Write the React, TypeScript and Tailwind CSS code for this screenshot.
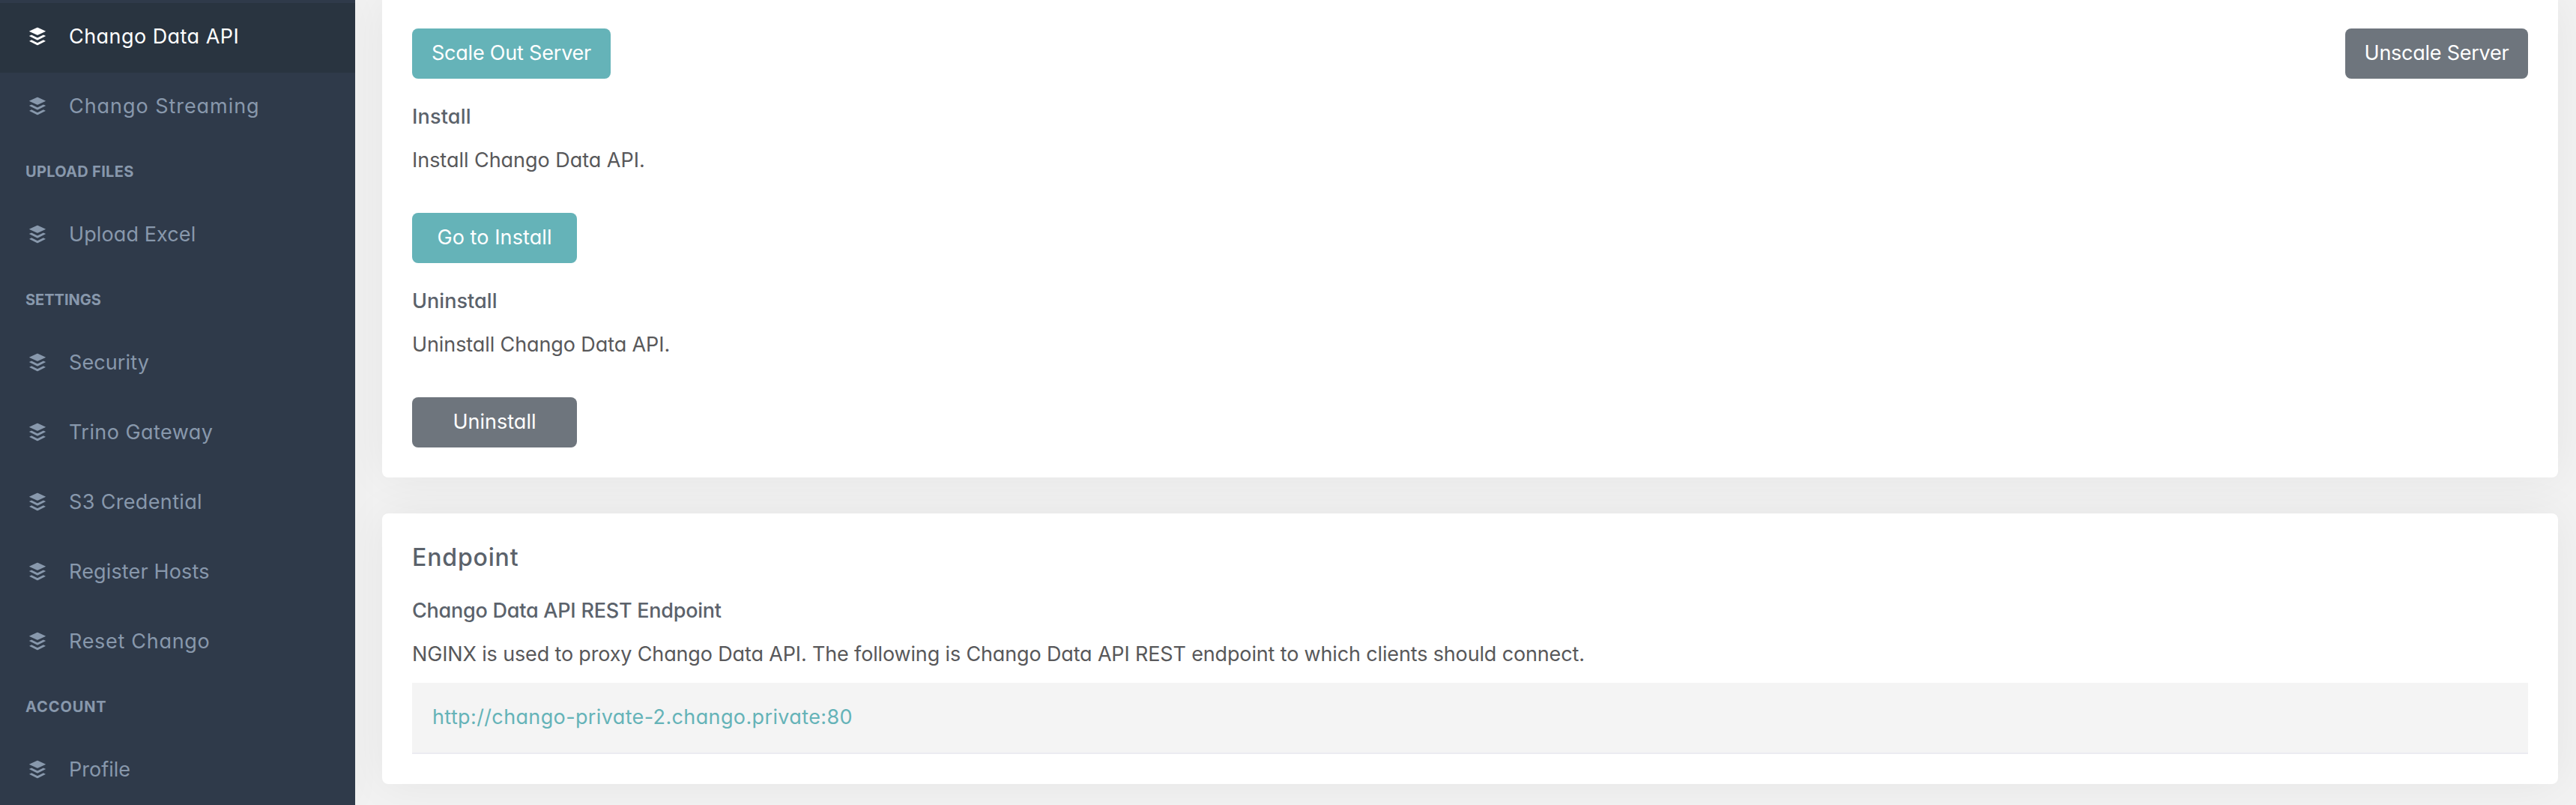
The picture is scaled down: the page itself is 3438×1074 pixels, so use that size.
import type { ReactNode } from "react";
import { FaBuffer } from "react-icons/fa";

function NavItem({ label, spacing, active = false }: { label: string; spacing: string; active?: boolean }) {
  return (
    <a
      className={`flex h-[93px] items-center pb-[5px] pl-[38px] text-[27px] ${
        active ? "bg-[#293440] text-white" : "text-[#8898ac]"
      }`}
    >
      <FaBuffer className="h-[27px] w-6 shrink-0" />
      <span className={`ml-[30px] pt-0.5 whitespace-nowrap ${spacing}`}>{label}</span>
    </a>
  );
}

function NavHeading({ label, spacing }: { label: string; spacing: string }) {
  return (
    <div className={`flex h-[78px] items-center pl-[34px] text-[20px] font-bold text-[#8898ac] ${spacing}`}>{label}</div>
  );
}

function Button({ className, children }: { className: string; children: ReactNode }) {
  return (
    <button
      className={`flex h-[67px] items-center justify-center rounded-lg pb-px text-[27px] whitespace-nowrap text-white ${className}`}
    >
      {children}
    </button>
  );
}

function Section({ title, titleSpacing, text, textSpacing }: { title: string; titleSpacing: string; text: string; textSpacing: string }) {
  return (
    <>
      <h5 className={`text-[27px] leading-10 font-medium text-[#5b626b] ${titleSpacing}`}>{title}</h5>
      <p className={`mt-[18px] text-[27px] leading-10 whitespace-nowrap text-[#58585a] ${textSpacing}`}>{text}</p>
    </>
  );
}

export default function App() {
  return (
    <div className="flex h-[1074px] w-[3438px] overflow-hidden bg-[#f2f2f2] font-['Inter',sans-serif] [font-feature-settings:'cv11']">
      <nav className="relative z-10 w-[474px] shrink-0 bg-[#2f3a4a] pt-1 shadow-[0_0_40px_rgba(0,0,0,0.03)]">
        <NavItem label="Chango Data API" spacing="tracking-[0.45px]" active />
        <NavItem label="Chango Streaming" spacing="tracking-[0.95px]" />
        <NavHeading label="UPLOAD FILES" spacing="tracking-[0.3px]" />
        <NavItem label="Upload Excel" spacing="tracking-[0.1px]" />
        <NavHeading label="SETTINGS" spacing="tracking-[0px]" />
        <NavItem label="Security" spacing="tracking-[0.1px]" />
        <NavItem label="Trino Gateway" spacing="tracking-[0.45px]" />
        <NavItem label="S3 Credential" spacing="tracking-[0.35px]" />
        <NavItem label="Register Hosts" spacing="tracking-[0.15px]" />
        <NavItem label="Reset Chango" spacing="tracking-[0.7px]" />
        <NavHeading label="ACCOUNT" spacing="tracking-[0.9px]" />
        <NavItem label="Profile" spacing="tracking-[0px]" />
      </nav>

      <main className="flex grow flex-col gap-12 pr-6 pl-9">
        <section className="h-[637px] shrink-0 rounded-b-lg bg-white px-10 pt-[38px] shadow-[0_0_60px_rgba(0,0,0,0.06)]">
          <div className="mb-[31px] flex justify-between">
            <Button className="w-[265px] bg-[#65b3b8] tracking-[-0.2px]">Scale Out Server</Button>
            <Button className="w-[244px] bg-[#6e757d] tracking-[-0.25px]">Unscale Server</Button>
          </div>
          <Section title="Install" titleSpacing="tracking-[0.2px]" text="Install Chango Data API." textSpacing="tracking-[-0.03px]" />
          <Button className="mt-[50px] mb-[31px] w-[220px] bg-[#65b3b8] tracking-[0.1px]">Go to Install</Button>
          <Section title="Uninstall" titleSpacing="tracking-[0.05px]" text="Uninstall Chango Data API." textSpacing="tracking-[-0.1px]" />
          <Button className="mt-[50px] w-[220px] bg-[#6e757d] tracking-[0px]">Uninstall</Button>
        </section>

        <section className="h-[361px] shrink-0 rounded-lg bg-white px-10 pt-[35px] shadow-[0_0_60px_rgba(0,0,0,0.06)]">
          <h4 className="mb-[27px] text-[32px] leading-[48px] font-medium tracking-[0.85px] text-[#5b626b]">Endpoint</h4>
          <Section
            title="Chango Data API REST Endpoint"
            titleSpacing="tracking-[-0.24px]"
            text="NGINX is used to proxy Chango Data API. The following is Chango Data API REST endpoint to which clients should connect."
            textSpacing="tracking-[-0.15px]"
          />
          <div className="mt-[18px] flex h-[95px] items-center border-b-2 border-[#ebebf1] bg-[#f4f4f4] pb-px pl-[27px]">
            <a className="text-[27px] tracking-[0.37px] text-[#65b3b8]">http://chango-private-2.chango.private:80</a>
          </div>
        </section>
      </main>
    </div>
  );
}
